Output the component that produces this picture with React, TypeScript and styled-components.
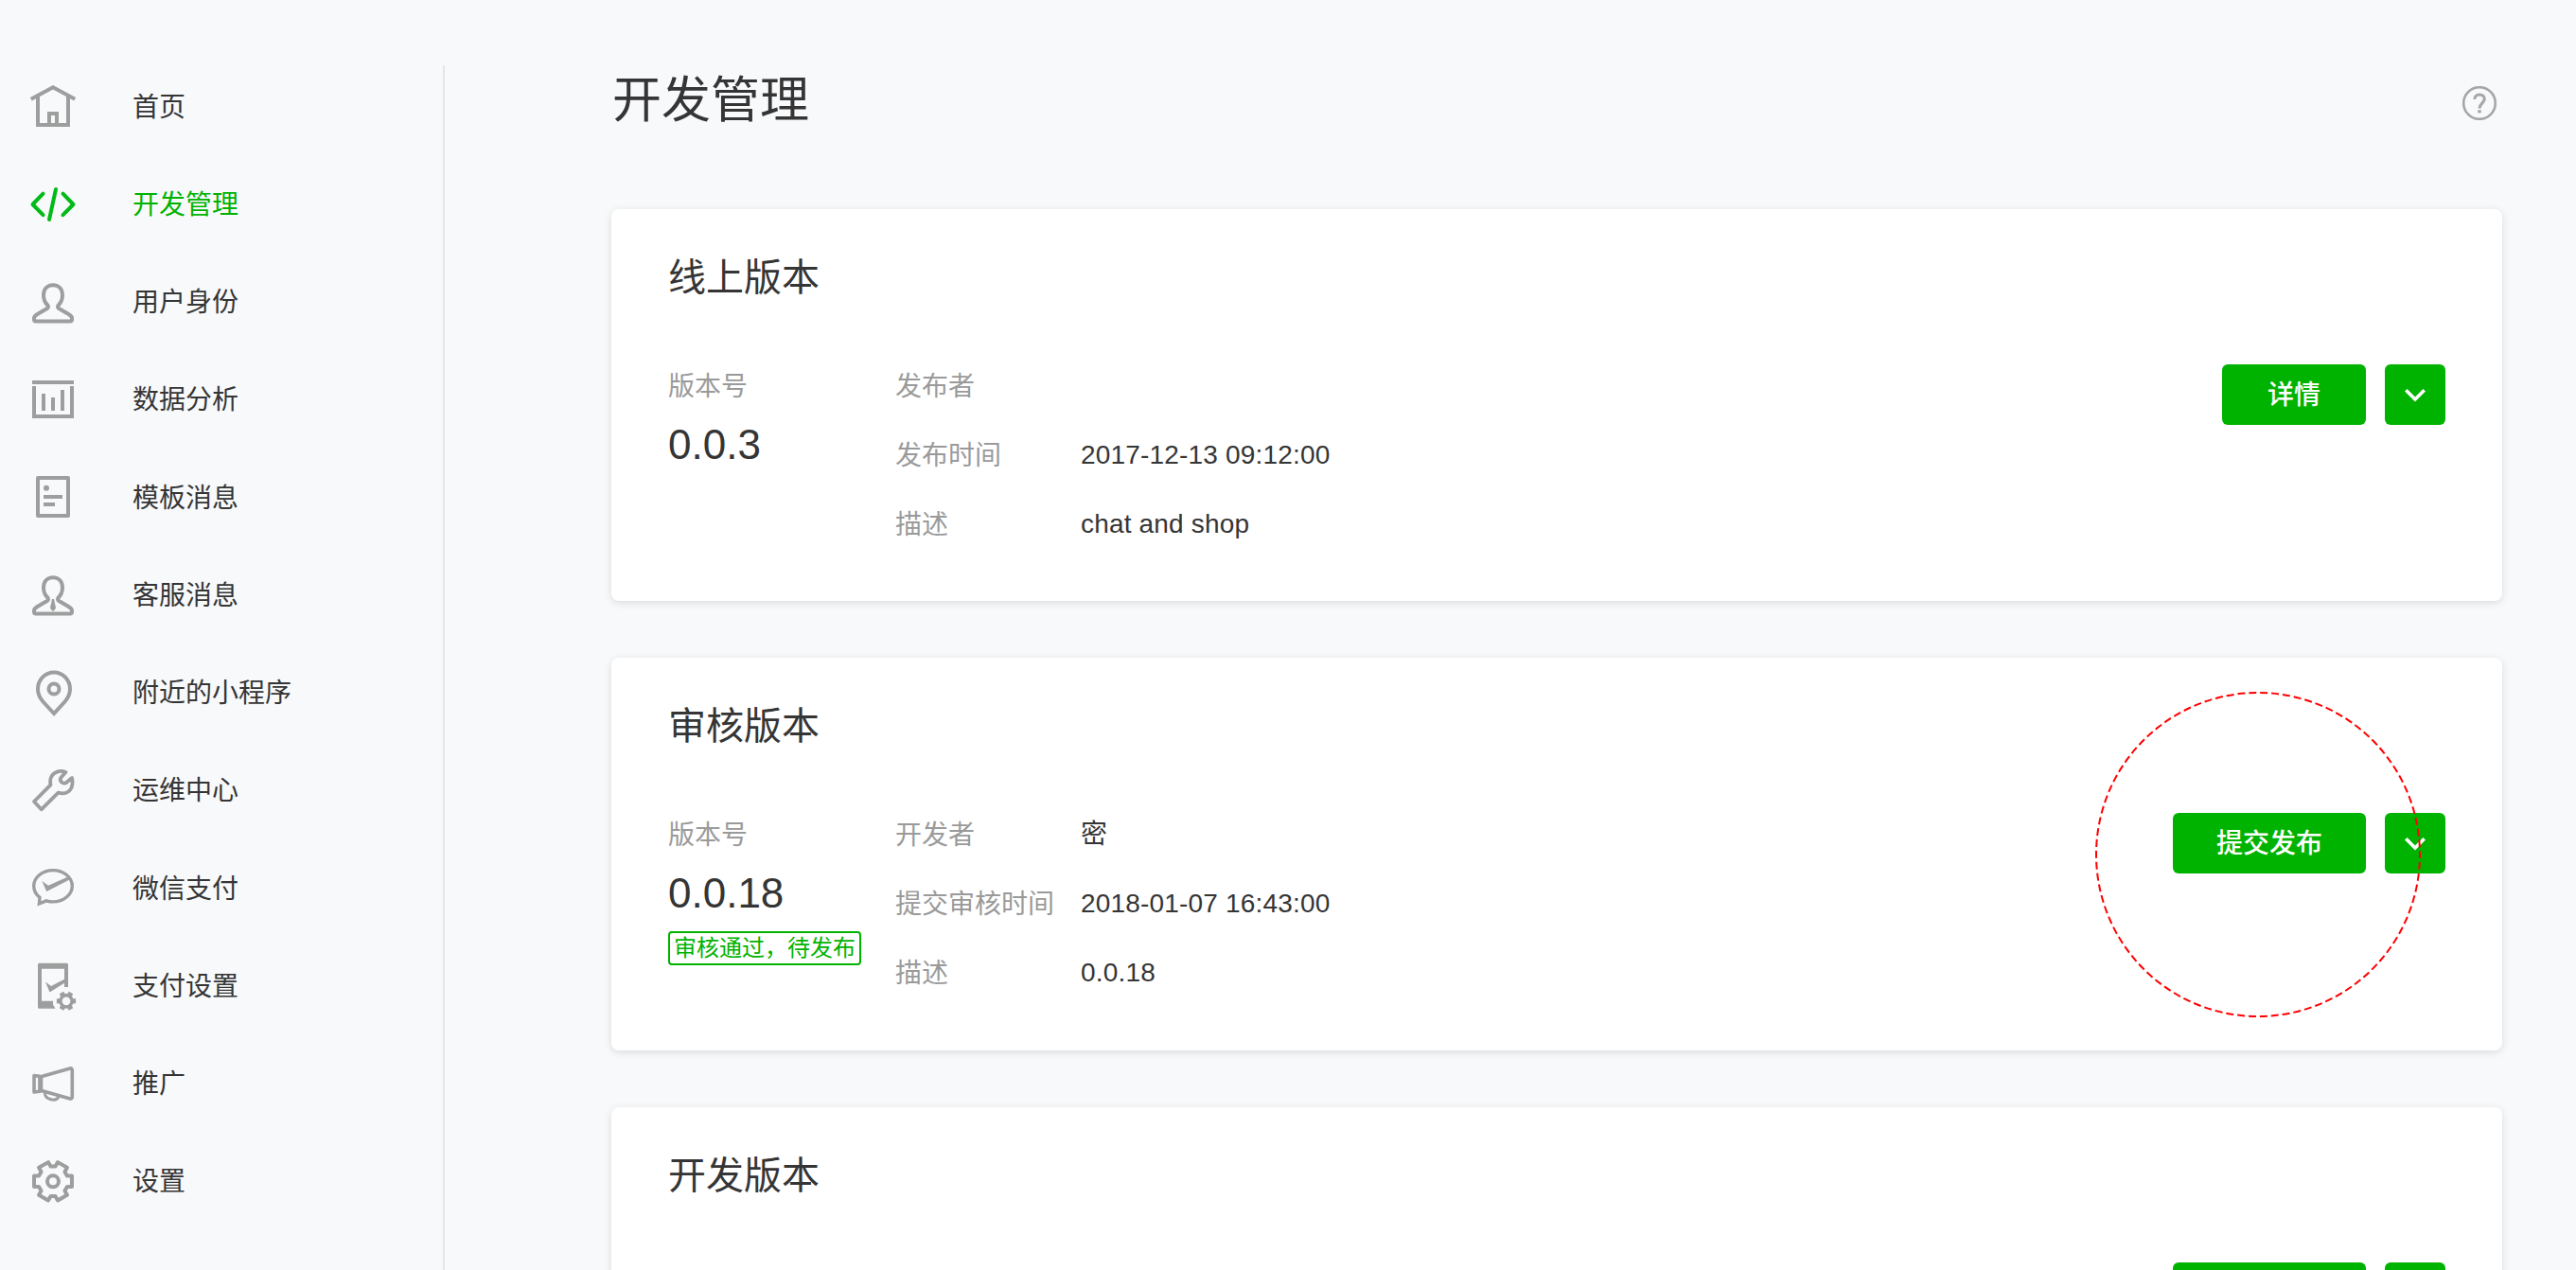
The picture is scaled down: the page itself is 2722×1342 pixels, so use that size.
import React from 'react';
import styled, { createGlobalStyle } from 'styled-components';

const GREEN = '#00b300';
const INK = '#353535';
const MUTED = '#9a9a9a';

const GlobalStyle = createGlobalStyle`
  * { box-sizing: border-box; }
  html, body { margin: 0; padding: 0; background: #f8f9fb; }
  body {
    font-family: "Liberation Sans", "Noto Sans CJK SC", sans-serif;
    font-size: 28px;
    color: ${INK};
    overflow: hidden;
  }
`;

const Page = styled.div`
  display: flex;
  height: 1342px;
  padding-top: 69px;
  overflow: hidden;
`;

const Sidebar = styled.nav`
  display: flex;
  flex-direction: column;
  flex: none;
  gap: 16.85px;
  width: 470px;
  padding-left: 32px;
  border-right: 2px solid #e4e6e8;
`;

const NavItem = styled.a<{ $active?: boolean }>`
  display: flex;
  flex: none;
  align-items: center;
  gap: 60px;
  height: 86.4px;
  line-height: 44px;
  color: ${(p) => (p.$active ? GREEN : INK)};
  svg { color: ${(p) => (p.$active ? '#00bb16' : '#9d9e9e')}; }
`;

const NavLabel = styled.span`
  padding-top: 3px;
`;

const Icon = styled.svg`
  flex: none;
  width: 48px;
  height: 48px;
  overflow: visible;
  fill: none;
  stroke: currentColor;
  stroke-width: 4;
`;

const Main = styled.main`
  flex: none;
  width: 1998px;
  margin-left: 176px;
`;

const Header = styled.header`
  display: flex;
  align-items: center;
  justify-content: space-between;
  height: 72px;
  margin-bottom: 80px;
  padding: 0 6px 0 1px;
`;

const Title = styled.h1`
  margin: 0;
  padding-top: 1px;
  font-size: 52px;
  font-weight: 400;
  line-height: 72px;
`;

const HelpIcon = styled.svg`
  width: 36px;
  height: 36px;
  margin-top: 8px;
  fill: none;
  stroke: #a6a6a7;
`;

const Cards = styled.div`
  display: flex;
  flex-direction: column;
  gap: 60px;
`;

const Card = styled.section`
  position: relative;
  flex: none;
  height: 414.4px;
  padding: 40px 60px 0;
  border-radius: 8px;
  background: #fff;
  box-shadow: 0 2px 8px rgba(0, 0, 0, 0.12);
`;

const CardTitle = styled.h2`
  margin: 0 0 46px;
  font-size: 40px;
  font-weight: 400;
  line-height: 65px;
  height: 64px;
`;

const CardBody = styled.div`
  display: flex;
  align-items: flex-start;
`;

const VersionColumn = styled.div`
  flex: none;
  width: 240px;
`;

const Label = styled.div`
  height: 73px;
  line-height: 75px;
  color: ${MUTED};
`;

const VersionNumber = styled.div`
  font-size: 44px;
  line-height: 52px;
`;

const StatusTag = styled.span`
  display: inline-block;
  height: 36px;
  margin-top: 14px;
  padding: 0 4px;
  border: 2px solid ${GREEN};
  border-radius: 4px;
  font-size: 24px;
  line-height: 32px;
  white-space: nowrap;
  color: ${GREEN};
  vertical-align: top;
`;

const Details = styled.div`
  display: grid;
  flex: 1;
  grid-template-columns: 196px 1fr;
  grid-auto-rows: 73px;
`;

const Value = styled.div`
  line-height: 74px;
  letter-spacing: 0.18px;
`;

const Actions = styled.div`
  display: flex;
  gap: 20px;
  padding-top: 14px;
`;

const Button = styled.button<{ $wide?: boolean }>`
  width: ${(p) => (p.$wide ? 204 : 152)}px;
  height: 64px;
  padding: 0;
  border: 0;
  border-radius: 6px;
  background: ${GREEN};
  color: #fff;
  font: 500 28px/64px "Liberation Sans", "Noto Sans CJK SC", sans-serif;
`;

const ButtonText = styled.span`
  display: block;
  padding-top: 2px;
  line-height: 62px;
`;

const MoreButton = styled(Button)`
  display: flex;
  align-items: center;
  justify-content: center;
  width: 64px;
  padding-top: 2px;
`;

const Highlight = styled.svg`
  position: absolute;
  left: 1568px;
  top: 35.6px;
  width: 344px;
  height: 344px;
  fill: none;
  stroke: #ff0000;
  stroke-width: 2;
  pointer-events: none;
`;

function gearPath(cx: number, cy: number, outer: number, root: number, tip: number, base: number) {
  const points: string[] = [];
  const add = (r: number, deg: number) => {
    const a = (deg * Math.PI) / 180;
    points.push(`${(cx + r * Math.cos(a)).toFixed(2)} ${(cy + r * Math.sin(a)).toFixed(2)}`);
  };
  for (let i = 0; i < 6; i++) {
    const mid = i * 60;
    add(root, mid - base);
    add(outer, mid - tip);
    add(outer, mid + tip);
    add(root, mid + base);
  }
  return `M${points.join('L')}Z`;
}

const PERSON =
  'M24 6.3C30.5 6.3 34 11 34 17C34 21.5 32.3 25 29.5 27.7Q28.2 29.6 30.3 31L40.5 37Q44 39.3 44 41V42.5Q44 44.5 42 44.5H6Q4 44.5 4 42.5V41Q4 39.3 7.5 37L17.7 31Q19.8 29.6 18.5 27.7C15.7 25 14 21.5 14 17C14 11 17.5 6.3 24 6.3Z';

const icons: Record<string, React.ReactNode> = {
  home: (
    <>
      <path d="M0.8 16.8L24 4.3L47.2 16.8" />
      <path d="M8 14V44H40V14M20 44V32H28V44" />
    </>
  ),
  code: (
    <g strokeLinecap="round" strokeLinejoin="round">
      <path d="M13.5 13.6L2.5 25L13.5 36.2M34.5 13.6L45.5 25L34.5 36.2" />
      <path d="M27 9L20 41" />
    </g>
  ),
  user: <path d={PERSON} />,
  data: <path d="M2 6H46M4 10V42H44V10M14 18V36M24 22V36M34 14V36" />,
  template: (
    <>
      <rect x="8" y="4" width="32" height="40" strokeLinejoin="round" />
      <circle cx="17" cy="14.8" r="3" fill="currentColor" stroke="none" />
      <path d="M14 24H34M14 32H26" />
    </>
  ),
  service: (
    <>
      <path d={PERSON} />
      <path d="M23 29H25L27 38.5L25 41.5H23L21 38.5Z" fill="currentColor" stroke="none" />
    </>
  ),
  nearby: (
    <>
      <path d="M25 46L13.5 33.5C9.5 29 8 25 8 20A17 17.5 0 0 1 42 20C42 25 40.5 29 36.5 33.5Z" />
      <circle cx="25" cy="20" r="5.5" />
    </>
  ),
  ops: (
    <path
      strokeLinejoin="round"
      strokeWidth="3.8"
      d="M37.5 5C30 2 22.5 6 21.3 12.5Q20.8 15.5 21.5 18.3L4 36L11.7 44.3L29.5 26.6C36 28.4 41 26.5 43.5 21.5Q45.3 17 44 11L38 16Q35 17.500 33 15.500Q30.800 13 32.500 10.500Z"
    />
  ),
  pay: (
    <>
      <path
        strokeWidth="3.4"
        d="M17 37.8Q20.5 38.9 24 38.9C35.2 38.9 44.3 31.5 44.3 22.3S35.2 5.6 24 5.6S3.7 13.1 3.7 22.3C3.7 27 6 31.2 10 34.3L9.4 40.8Z"
      />
      <path d="M12.3 17L19 21.8L41.5 11.7L42.5 15L17.3 28Z" fill="currentColor" stroke="none" />
    </>
  ),
  paySetting: (
    <>
      <path
        fill="currentColor"
        stroke="none"
        d="M9.5 0.8H38.5Q40 0.8 40 2.3V26H36V6.8H12V40.8H24V44.5L26.5 48.8H9.5Q8 48.8 8 47.3V2.3Q8 0.8 9.5 0.8Z"
      />
      <path d="M16 20.5L22 25L36.5 17.5V21.5L20.5 31.5Z" fill="currentColor" stroke="none" />
      <path
        d={`${gearPath(38, 40.8, 10.4, 7.8, 14, 20)}M42.4 40.800A4.400 4.400 0 1 0 33.600 40.800A4.400 4.400 0 1 0 42.400 40.800Z`}
        fill="currentColor"
        fillRule="evenodd"
        stroke="none"
      />
    </>
  ),
  promote: (
    <g strokeLinejoin="round" strokeWidth="3.6">
      <path d="M4 15.500L10 16.300V32.200L4 33ZM12 16.500L42 8Q44.300 7.500 44.300 10V38Q44.300 40.500 42 40L12 31.500" />
      <path d="M11 15V33.500" strokeWidth="4.600" />
      <path strokeWidth="3" d="M15.5 34Q15 38.5 21 40.5Q27.5 42.7 30 38" />
    </g>
  ),
  settings: (
    <>
      <path d={gearPath(24, 24.3, 20.8, 16, 16, 21)} strokeLinejoin="round" />
      <circle cx="24" cy="24.3" r="6" />
    </>
  ),
};

const navItems = [
  { icon: 'home', label: '首页' },
  { icon: 'code', label: '开发管理', active: true },
  { icon: 'user', label: '用户身份' },
  { icon: 'data', label: '数据分析' },
  { icon: 'template', label: '模板消息' },
  { icon: 'service', label: '客服消息' },
  { icon: 'nearby', label: '附近的小程序' },
  { icon: 'ops', label: '运维中心' },
  { icon: 'pay', label: '微信支付' },
  { icon: 'paySetting', label: '支付设置' },
  { icon: 'promote', label: '推广' },
  { icon: 'settings', label: '设置' },
];

interface Version {
  title: string;
  version?: string;
  status?: string;
  details: [string, string][];
  action?: string;
  wide?: boolean;
  highlighted?: boolean;
}

const versions: Version[] = [
  {
    title: '线上版本',
    version: '0.0.3',
    details: [
      ['发布者', ''],
      ['发布时间', '2017-12-13 09:12:00'],
      ['描述', 'chat and shop'],
    ],
    action: '详情',
  },
  {
    title: '审核版本',
    version: '0.0.18',
    status: '审核通过，待发布',
    details: [
      ['开发者', '密'],
      ['提交审核时间', '2018-01-07 16:43:00'],
      ['描述', '0.0.18'],
    ],
    action: '提交发布',
    wide: true,
    highlighted: true,
  },
  { title: '开发版本', details: [], wide: true },
];

function VersionCard({ title, version, status, details, action, wide, highlighted }: Version) {
  return (
    <Card>
      <CardTitle>{title}</CardTitle>
      <CardBody>
        <VersionColumn>
          {version && (
            <>
              <Label>版本号</Label>
              <VersionNumber>{version}</VersionNumber>
            </>
          )}
          {status && <StatusTag>{status}</StatusTag>}
        </VersionColumn>
        <Details>
          {details.map(([label, value]) => (
            <React.Fragment key={label}>
              <Label>{label}</Label>
              <Value>{value}</Value>
            </React.Fragment>
          ))}
        </Details>
        <Actions>
          <Button $wide={wide}>{action && <ButtonText>{action}</ButtonText>}</Button>
          <MoreButton>
            <svg width="24" height="16" viewBox="0 0 24 16" fill="none" stroke="#fff" strokeWidth="3.6">
              <path d="M2.3 2.3L12 12L21.7 2.3" />
            </svg>
          </MoreButton>
        </Actions>
      </CardBody>
      {highlighted && (
        <Highlight viewBox="0 0 344 344">
          <circle cx="172" cy="172" r="171" strokeDasharray="8 3.937" strokeDashoffset="4" />
        </Highlight>
      )}
    </Card>
  );
}

export default function App() {
  return (
    <>
      <GlobalStyle />
      <Page>
        <Sidebar>
          {navItems.map((item) => (
            <NavItem key={item.icon} $active={item.active}>
              <Icon viewBox="0 0 48 48">{icons[item.icon]}</Icon>
              <NavLabel>{item.label}</NavLabel>
            </NavItem>
          ))}
        </Sidebar>
        <Main>
          <Header>
            <Title>开发管理</Title>
            <HelpIcon viewBox="0 0 36 36">
              <circle cx="18" cy="18" r="16.8" strokeWidth="2.6" />
              <path
                d="M12.8 14C12.8 10.8 15 8.9 18 8.900S23.3 10.8 23.3 13.8C23.3 17.5 18 18.5 18 23.5"
                strokeWidth="3"
              />
              <path d="M18 25.3V28.3" strokeWidth="3.6" />
            </HelpIcon>
          </Header>
          <Cards>
            {versions.map((v) => (
              <VersionCard key={v.title} {...v} />
            ))}
          </Cards>
        </Main>
      </Page>
    </>
  );
}
